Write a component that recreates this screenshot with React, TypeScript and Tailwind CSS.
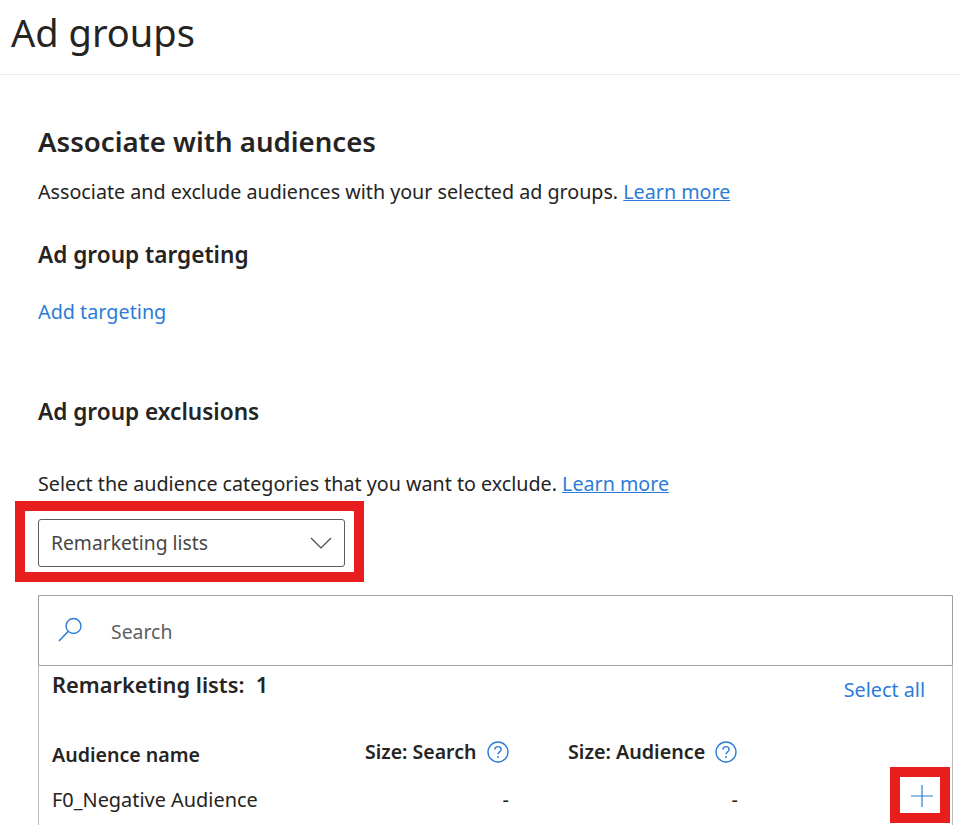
import React from "react";

const HelpIcon = () => (
  <svg width="22" height="22" viewBox="0 0 22 22" fill="none" className="shrink-0">
    <circle cx="11" cy="11" r="10" stroke="#2b7cd8" strokeWidth="1.4" />
    <path d="M7.9 8.6c0-1.8 1.4-3 3.1-3s3.1 1.1 3.1 2.8c0 2.4-3.1 2.5-3.1 4.9" stroke="#2b7cd8" strokeWidth="1.4" />
    <circle cx="11" cy="16" r="1" fill="#2b7cd8" />
  </svg>
);

export default function App() {
  return (
    <div className="w-[960px] h-[825px] overflow-hidden bg-white text-[#252423] font-['Noto_Sans',sans-serif]">
      <div className="h-[75px] border-b border-[#edebe9] pl-[11px]">
        <h1 className="text-[38px] leading-[64px]">Ad groups</h1>
      </div>

      <div className="pl-[38px] pr-[7px]">
        <h2 className="mt-[46px] text-[27.6px] leading-[40px] font-semibold">Associate with audiences</h2>
        <p className="mt-[16px] text-[19.7px] leading-[30px]">
          Associate and exclude audiences with your selected ad groups.{" "}
          <a className="text-[#2b7cd8] underline">Learn more</a>
        </p>

        <h3 className="mt-[32px] text-[22.6px] leading-[32px] font-semibold">Ad group targeting</h3>
        <a className="mt-[26px] block text-[19.8px] leading-[30px] text-[#2b7cd8]">Add targeting</a>

        <h3 className="mt-[69px] text-[22.6px] leading-[32px] font-semibold">Ad group exclusions</h3>
        <p className="mt-[41px] text-[19.7px] leading-[30px]">
          Select the audience categories that you want to exclude.{" "}
          <a className="text-[#2b7cd8] underline">Learn more</a>
        </p>

        <div className="relative mt-[20px] flex h-[48px] w-[307px] items-center justify-between rounded-[3px] border border-[#605e5c] pl-[12px] pr-[12px]">
          <span className="mt-[1px] text-[19.3px] text-[#484644]">Remarketing lists</span>
          <svg width="22" height="12" viewBox="0 0 22 12" fill="none">
            <path d="M1 1l10 10L21 1" stroke="#484644" strokeWidth="1.2" />
          </svg>
          <div className="absolute -left-[24px] -right-[20px] -top-[19px] -bottom-[16px] border-[10px] border-[#e81e1e]" />
        </div>

        <div className="mt-[28px] h-[300px] border-r border-l border-[#bdbbb9]">
          <div className="-mx-px flex h-[71px] items-center rounded-[2px] border border-[#a19f9d] pl-[18px]">
            <svg width="27" height="27" viewBox="0 0 27 27" fill="none" className="-mt-[2px]">
              <circle cx="16.5" cy="10" r="7.5" stroke="#2b7cd8" strokeWidth="1.4" />
              <path d="M11 15.5L2 25" stroke="#2b7cd8" strokeWidth="1.6" />
            </svg>
            <span className="ml-[27px] mt-[2px] text-[19.4px] text-[#605e5c]">Search</span>
          </div>

          <div className="flex justify-between pl-[13px] pr-[27px]">
            <span className="mt-[3px] text-[21.8px] leading-[32px] font-semibold">Remarketing lists:&nbsp; 1</span>
            <a className="mt-[9px] text-[19.8px] leading-[30px] text-[#2b7cd8]">Select all</a>
          </div>

          <div className="mt-[29px] grid grid-cols-[313px_203px_180px_1fr] pl-[13px]">
            <span className="mt-[6px] text-[19.6px] leading-[30px] font-semibold">Audience name</span>
            <span className="flex items-center gap-[11px] text-[19.5px] leading-[30px] font-semibold">
              Size: Search <HelpIcon />
            </span>
            <span className="flex items-center gap-[10px] text-[19.7px] leading-[30px] font-semibold">
              Size: Audience <HelpIcon />
            </span>
          </div>

          <div className="mt-[15px] grid grid-cols-[312px_145px_229px_1fr] pl-[13px] text-[19.9px] leading-[30px]">
            <span>F0_Negative Audience</span>
            <span className="text-right">-</span>
            <span className="text-right">-</span>
            <div className="relative">
              <div className="absolute left-[152px] top-[-18px] flex h-[56px] w-[60px] items-center justify-center border-[10px] border-[#e81e1e] bg-white">
                <svg width="22" height="22" viewBox="0 0 22 22" fill="none" className="ml-[3px] mt-[1px]">
                  <path d="M11 0v22M0 11h22" stroke="#2b7cd8" strokeWidth="1.2" />
                </svg>
              </div>
            </div>
          </div>
        </div>
      </div>
    </div>
  );
}
